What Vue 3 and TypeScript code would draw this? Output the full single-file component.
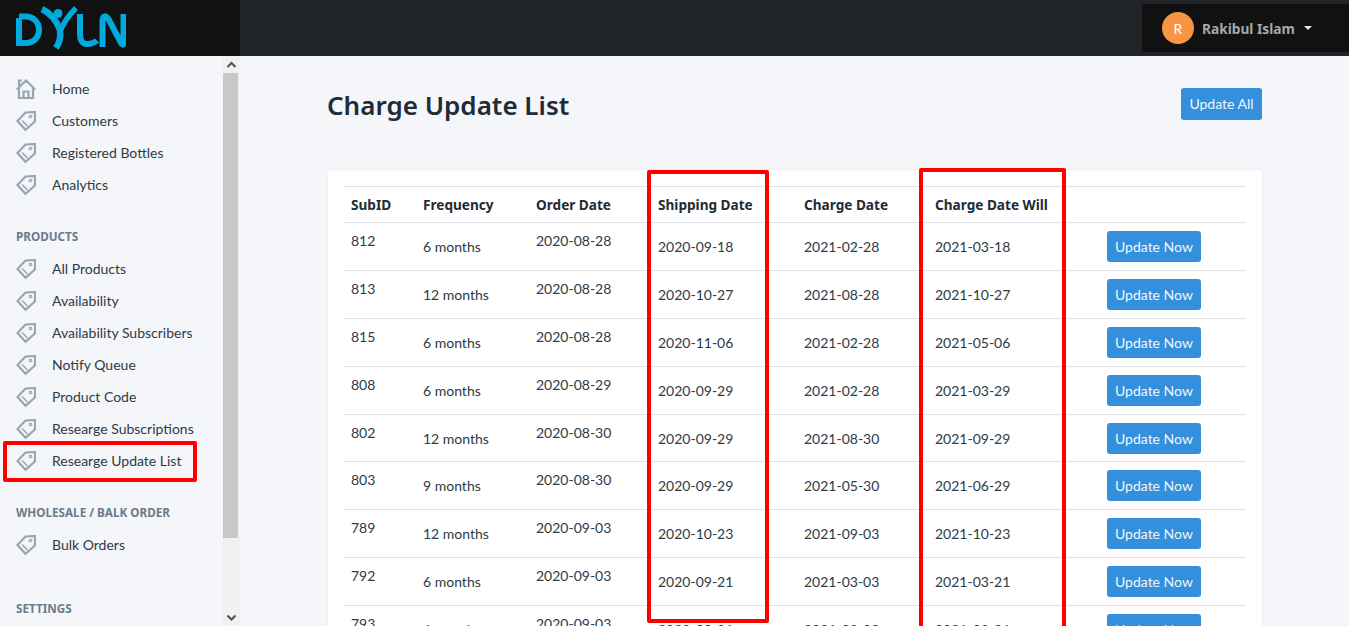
<script setup lang="ts">
interface Row { id: string; freq: string; order: string; ship: string; charge: string; will: string }
const rows: Row[] = [
  { id: '812', freq: '6 months', order: '2020-08-28', ship: '2020-09-18', charge: '2021-02-28', will: '2021-03-18' },
  { id: '813', freq: '12 months', order: '2020-08-28', ship: '2020-10-27', charge: '2021-08-28', will: '2021-10-27' },
  { id: '815', freq: '6 months', order: '2020-08-28', ship: '2020-11-06', charge: '2021-02-28', will: '2021-05-06' },
  { id: '808', freq: '6 months', order: '2020-08-29', ship: '2020-09-29', charge: '2021-02-28', will: '2021-03-29' },
  { id: '802', freq: '12 months', order: '2020-08-30', ship: '2020-09-29', charge: '2021-08-30', will: '2021-09-29' },
  { id: '803', freq: '9 months', order: '2020-08-30', ship: '2020-09-29', charge: '2021-05-30', will: '2021-06-29' },
  { id: '789', freq: '12 months', order: '2020-09-03', ship: '2020-10-23', charge: '2021-09-03', will: '2021-10-23' },
  { id: '792', freq: '6 months', order: '2020-09-03', ship: '2020-09-21', charge: '2021-03-03', will: '2021-03-21' },
  { id: '793', freq: '6 months', order: '2020-09-03', ship: '2020-09-21', charge: '2021-03-03', will: '2021-03-21' },
]
const groups = [
  { items: ['Customers', 'Registered Bottles', 'Analytics'] },
  { title: 'PRODUCTS', items: ['All Products', 'Availability', 'Availability Subscribers', 'Notify Queue', 'Product Code', 'Researge Subscriptions', 'Researge Update List'] },
  { title: 'WHOLESALE / BALK ORDER', items: ['Bulk Orders'] },
]
</script>

<template>
  <div class="app">
    <header class="topbar">
      <div class="brand">
        <svg width="112" height="50" viewBox="0 0 112 50" class="logo" fill="none" stroke="#00a9dc" stroke-width="6">
          <path d="M5 14V39H12C20 39 25 33 25 26C25 18 19 12.500 12 12.500H5" />
          <path d="M28 5C36 9 42 15 46 26C47 33 46 38 42 44" stroke-width="6.500" />
          <path d="M62 4C56 10 50 18 46 27" stroke-width="5.500" />
          <circle cx="44" cy="9.500" r="4.500" fill="#00a9dc" stroke="none" />
          <path d="M66 10V30C66 37 69 40.500 74 40C78 39.800 81 38.500 83 36.500" />
          <path d="M88.500 43V17C88.500 11 92 11 95 16L106 37C108 41 109.500 42 109.500 38V10" />
        </svg>
      </div>
      <div class="bar">
        <div class="user">
          <span class="avatar">R</span>
          <span class="name">Rakibul Islam</span>
          <span class="caret"></span>
        </div>
      </div>
    </header>

    <div class="body">
      <aside class="sidebar">
        <nav class="nav">
          <a class="item">
            <svg class="icon" viewBox="0 0 20 20" fill="none" stroke="#98a6b4" stroke-width="2.200">
              <path d="M0.800 10.500L10 1.500L19.200 10.500M3 8V19H17V8M3 7V1.500H6M7.500 19V12.500H12.500V19" />
            </svg>
            <span class="text">Home</span>
          </a>
          <template v-for="g in groups" :key="g.title ?? 'main'">
            <div v-if="g.title" class="label">{{ g.title }}</div>
            <a v-for="it in g.items" :key="it" class="item">
              <svg class="icon" viewBox="0 0 20 20" fill="none" stroke="#98a6b4" stroke-width="2.200">
                <path d="M19 1L9.500 1.500L1.500 10L9.500 18.800L19 10.500Z" />
                <path d="M6 9.500L11.500 15" stroke-width="1.500" />
                <circle cx="14.500" cy="5.500" r="1.200" stroke-width="1.200" />
              </svg>
              <span class="text">{{ it }}</span>
            </a>
          </template>
          <div class="label settings">SETTINGS</div>
        </nav>
        <div class="scrollbar">
          <svg class="arrow" width="17" height="17" viewBox="0 0 17 17" fill="none" stroke="#505050" stroke-width="2"><path d="M4.500 11L8.500 7L12.500 11" /></svg>
          <div class="track"><div class="thumb"></div></div>
          <svg class="arrow" width="17" height="17" viewBox="0 0 17 17" fill="none" stroke="#505050" stroke-width="2"><path d="M4.500 6.500L8.500 10.500L12.500 6.500" /></svg>
        </div>
      </aside>

      <main class="main">
        <div class="head">
          <h1>Charge Update List</h1>
          <button class="btn">Update All</button>
        </div>
        <section class="card">
          <table>
            <colgroup>
              <col class="c1" /><col class="c2" /><col class="c3" />
              <col class="c4" /><col class="c5" /><col class="c6" /><col class="c7" />
            </colgroup>
            <thead>
              <tr>
                <th>SubID</th><th>Frequency</th><th>Order Date</th><th>Shipping Date</th><th>Charge Date</th><th>Charge Date Will</th><th></th>
              </tr>
            </thead>
            <tbody>
              <tr v-for="r in rows" :key="r.id">
                <td class="top">{{ r.id }}</td>
                <td>{{ r.freq }}</td>
                <td class="top">{{ r.order }}</td>
                <td>{{ r.ship }}</td>
                <td>{{ r.charge }}</td>
                <td>{{ r.will }}</td>
                <td><button class="btn">Update Now</button></td>
              </tr>
            </tbody>
          </table>
        </section>
      </main>
    </div>

    <div class="mark mark-nav"></div>
    <div class="mark mark-ship"></div>
    <div class="mark mark-will"></div>
  </div>
</template>

<style>
html, body { margin: 0; height: 100%; overflow: hidden; }
</style>

<style scoped>
.app { position: relative; width: 1349px; height: 626px; overflow: hidden; background: #f4f6f9; font-family: Lato, "Noto Sans", sans-serif; font-size: 14px; color: #212b36; }
.topbar { display: flex; height: 56px; }
.brand { width: 240px; background: #111; flex: none; }
.logo { display: block; margin: 4px 0 0 14px; }
.bar { flex: 1; background: #212529; display: flex; justify-content: flex-end; align-items: center; }
.user { width: 207px; height: 48px; box-sizing: border-box; background: #111; display: flex; align-items: center; padding-left: 20px; }
.avatar { width: 32px; height: 32px; border-radius: 50%; background: #f79642; color: #fff; display: flex; align-items: center; justify-content: center; }
.name { margin-left: 8px; font-family: "Noto Sans", sans-serif; font-size: 13.7px; font-weight: 700; color: #a8a8a8; }
.caret { margin-left: 9px; border-left: 4px solid transparent; border-right: 4px solid transparent; border-top: 4px solid #e8e8e8; margin-top: -1px; }
.body { display: flex; height: 570px; }
.sidebar { width: 240px; flex: none; display: flex; }
.nav { width: 223px; flex: none; padding-top: 17px; box-sizing: border-box; }
.item { display: flex; align-items: center; height: 32px; padding-left: 16px; color: #2f3a45; font-size: 14px; white-space: nowrap; }
.text { margin-bottom: 2px; }
.icon { width: 20px; height: 20px; flex: none; margin-right: 16px; }
.label { height: 20px; margin-top: 25px; margin-bottom: 7px; padding-left: 16px; font-family: "Noto Sans", sans-serif; font-size: 11.7px; font-weight: 700; color: #6b7b8b; line-height: 20px; white-space: nowrap; }
.settings { margin-top: 37px; }
.scrollbar { width: 17px; height: 570px; background: #f1f1f1; display: flex; flex-direction: column; }
.arrow { flex: none; }
.track { flex: 1; }
.thumb { width: 15px; height: 465px; background: #c8c8c8; }
.main { flex: 1; padding: 32px 87px 0 88px; min-width: 0; }
.head { display: flex; justify-content: space-between; height: 82px; }
h1 { margin: -1px 0 0 -1px; font-family: "Noto Sans", sans-serif; font-size: 26px; line-height: 36px; font-weight: 600; color: #212b36; }
.btn { background: #3490dc; color: #f0f6fb; border: 0; border-radius: 3px; font: inherit; font-size: 14px; height: 31px; padding: 0 8px; white-space: nowrap; }
.head .btn { width: 81px; height: 32px; padding: 0 0 1px; }
.card { background: #fff; border-radius: 4px; box-shadow: 0 0 3px rgba(0, 0, 0, 0.08); padding: 16px; height: 600px; box-sizing: border-box; }
table { table-layout: fixed; border-collapse: collapse; width: 902px; }
.c1 { width: 72px; } .c2 { width: 113px; } .c3 { width: 122px; } .c4 { width: 146px; } .c5 { width: 131px; } .c6 { width: 172px; } .c7 { width: 146px; }
th { text-align: left; font-family: "Noto Sans", sans-serif; font-weight: 700; height: 36px; padding: 0 7px; border-top: 1px solid #dee2e6; border-bottom: 1px solid #dee2e6; font-size: 13.6px; box-sizing: border-box; }
td { height: 47.9px; box-sizing: border-box; padding: 0 7px; border-bottom: 1px solid #dee2e6; vertical-align: middle; color: #2f3a45; white-space: nowrap; }
td.top { vertical-align: top; padding-top: 9px; }
.mark { position: absolute; box-sizing: border-box; border: 4px solid #f00; border-radius: 2px; pointer-events: none; }
.mark-nav { left: 3px; top: 441px; width: 194px; height: 41px; }
.mark-ship { left: 647px; top: 170px; width: 122px; height: 453px; }
.mark-will { left: 919px; top: 168px; width: 147px; height: 480px; }
</style>
